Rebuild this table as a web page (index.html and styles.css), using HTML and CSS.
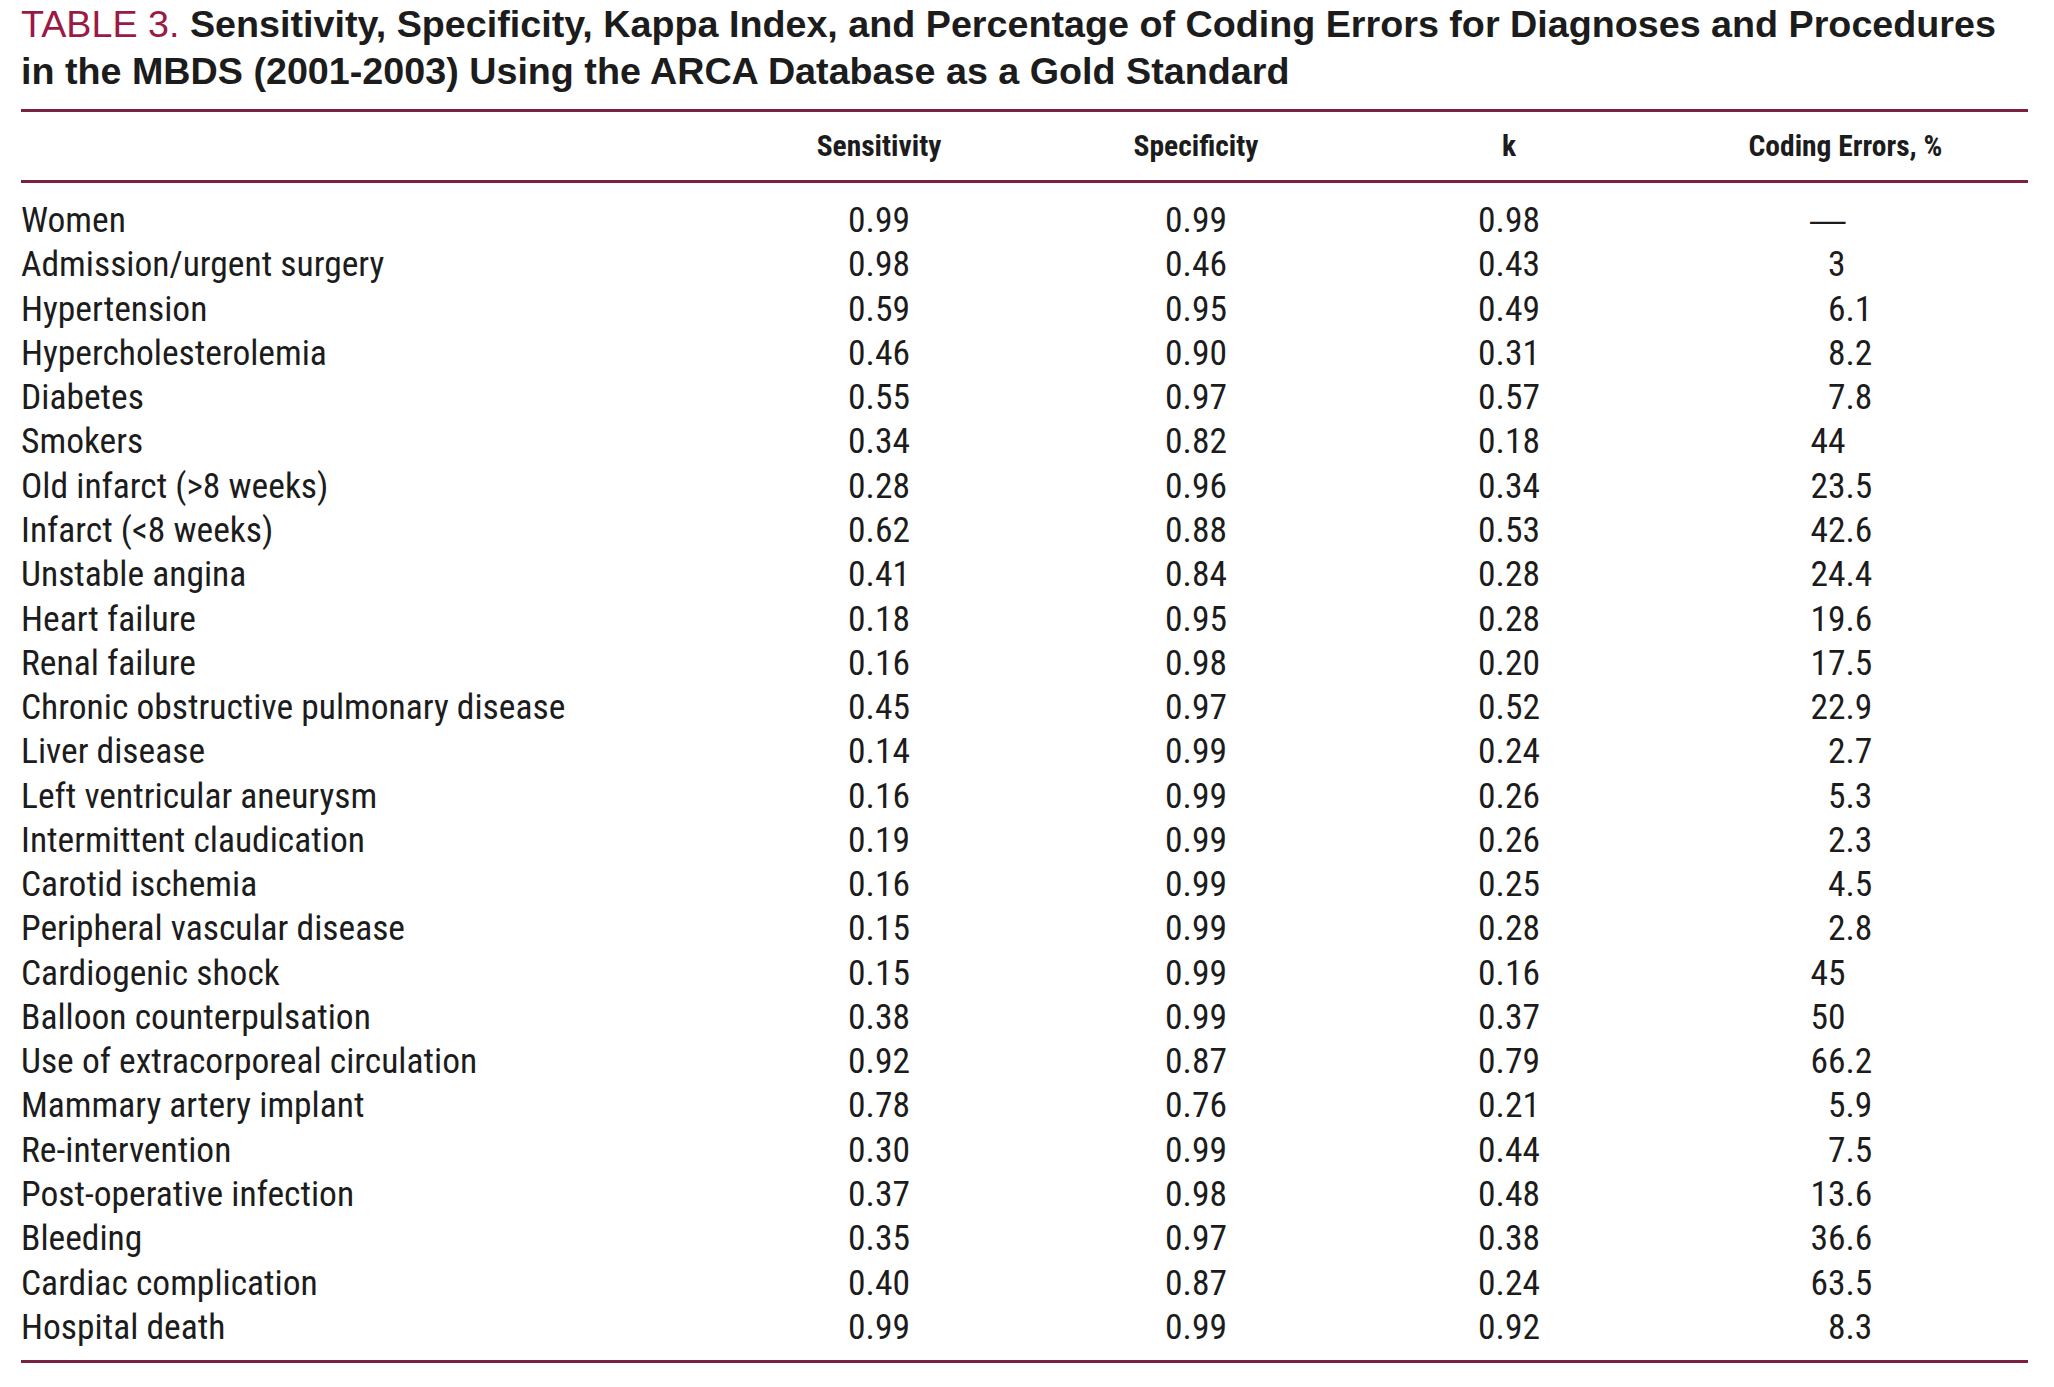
FILE: index.html
```html
<!DOCTYPE html>
<html lang="en">
<head>
<meta charset="utf-8">
<title>Table 3</title>
<link rel="stylesheet" href="styles.css">
</head>
<body>
<div class="page">
  <h1 class="caption"><span class="label">TABLE 3.</span> Sensitivity, Specificity, Kappa Index, and Percentage of Coding Errors for Diagnoses and Procedures<br>in the MBDS (2001-2003) Using the ARCA Database as a Gold Standard</h1>
  <div class="table">
    <div class="head">
      <div class="cell name"></div>
      <div class="cell">Sensitivity</div>
      <div class="cell">Specificity</div>
      <div class="cell">k</div>
      <div class="cell">Coding Errors, %</div>
    </div>
    <div class="body">
      <div class="row"><div class="name">Women</div><div class="num">0.99</div><div class="num">0.99</div><div class="num">0.98</div><div class="dec"><span class="i dash">—</span><span class="f"></span></div></div>
      <div class="row"><div class="name">Admission/urgent surgery</div><div class="num">0.98</div><div class="num">0.46</div><div class="num">0.43</div><div class="dec"><span class="i">3</span><span class="f"></span></div></div>
      <div class="row"><div class="name">Hypertension</div><div class="num">0.59</div><div class="num">0.95</div><div class="num">0.49</div><div class="dec"><span class="i">6</span><span class="f">.1</span></div></div>
      <div class="row"><div class="name">Hypercholesterolemia</div><div class="num">0.46</div><div class="num">0.90</div><div class="num">0.31</div><div class="dec"><span class="i">8</span><span class="f">.2</span></div></div>
      <div class="row"><div class="name">Diabetes</div><div class="num">0.55</div><div class="num">0.97</div><div class="num">0.57</div><div class="dec"><span class="i">7</span><span class="f">.8</span></div></div>
      <div class="row"><div class="name">Smokers</div><div class="num">0.34</div><div class="num">0.82</div><div class="num">0.18</div><div class="dec"><span class="i">44</span><span class="f"></span></div></div>
      <div class="row"><div class="name">Old infarct (&gt;8 weeks)</div><div class="num">0.28</div><div class="num">0.96</div><div class="num">0.34</div><div class="dec"><span class="i">23</span><span class="f">.5</span></div></div>
      <div class="row"><div class="name">Infarct (&lt;8 weeks)</div><div class="num">0.62</div><div class="num">0.88</div><div class="num">0.53</div><div class="dec"><span class="i">42</span><span class="f">.6</span></div></div>
      <div class="row"><div class="name">Unstable angina</div><div class="num">0.41</div><div class="num">0.84</div><div class="num">0.28</div><div class="dec"><span class="i">24</span><span class="f">.4</span></div></div>
      <div class="row"><div class="name">Heart failure</div><div class="num">0.18</div><div class="num">0.95</div><div class="num">0.28</div><div class="dec"><span class="i">19</span><span class="f">.6</span></div></div>
      <div class="row"><div class="name">Renal failure</div><div class="num">0.16</div><div class="num">0.98</div><div class="num">0.20</div><div class="dec"><span class="i">17</span><span class="f">.5</span></div></div>
      <div class="row"><div class="name">Chronic obstructive pulmonary disease</div><div class="num">0.45</div><div class="num">0.97</div><div class="num">0.52</div><div class="dec"><span class="i">22</span><span class="f">.9</span></div></div>
      <div class="row"><div class="name">Liver disease</div><div class="num">0.14</div><div class="num">0.99</div><div class="num">0.24</div><div class="dec"><span class="i">2</span><span class="f">.7</span></div></div>
      <div class="row"><div class="name">Left ventricular aneurysm</div><div class="num">0.16</div><div class="num">0.99</div><div class="num">0.26</div><div class="dec"><span class="i">5</span><span class="f">.3</span></div></div>
      <div class="row"><div class="name">Intermittent claudication</div><div class="num">0.19</div><div class="num">0.99</div><div class="num">0.26</div><div class="dec"><span class="i">2</span><span class="f">.3</span></div></div>
      <div class="row"><div class="name">Carotid ischemia</div><div class="num">0.16</div><div class="num">0.99</div><div class="num">0.25</div><div class="dec"><span class="i">4</span><span class="f">.5</span></div></div>
      <div class="row"><div class="name">Peripheral vascular disease</div><div class="num">0.15</div><div class="num">0.99</div><div class="num">0.28</div><div class="dec"><span class="i">2</span><span class="f">.8</span></div></div>
      <div class="row"><div class="name">Cardiogenic shock</div><div class="num">0.15</div><div class="num">0.99</div><div class="num">0.16</div><div class="dec"><span class="i">45</span><span class="f"></span></div></div>
      <div class="row"><div class="name">Balloon counterpulsation</div><div class="num">0.38</div><div class="num">0.99</div><div class="num">0.37</div><div class="dec"><span class="i">50</span><span class="f"></span></div></div>
      <div class="row"><div class="name">Use of extracorporeal circulation</div><div class="num">0.92</div><div class="num">0.87</div><div class="num">0.79</div><div class="dec"><span class="i">66</span><span class="f">.2</span></div></div>
      <div class="row"><div class="name">Mammary artery implant</div><div class="num">0.78</div><div class="num">0.76</div><div class="num">0.21</div><div class="dec"><span class="i">5</span><span class="f">.9</span></div></div>
      <div class="row"><div class="name">Re-intervention</div><div class="num">0.30</div><div class="num">0.99</div><div class="num">0.44</div><div class="dec"><span class="i">7</span><span class="f">.5</span></div></div>
      <div class="row"><div class="name">Post-operative infection</div><div class="num">0.37</div><div class="num">0.98</div><div class="num">0.48</div><div class="dec"><span class="i">13</span><span class="f">.6</span></div></div>
      <div class="row"><div class="name">Bleeding</div><div class="num">0.35</div><div class="num">0.97</div><div class="num">0.38</div><div class="dec"><span class="i">36</span><span class="f">.6</span></div></div>
      <div class="row"><div class="name">Cardiac complication</div><div class="num">0.40</div><div class="num">0.87</div><div class="num">0.24</div><div class="dec"><span class="i">63</span><span class="f">.5</span></div></div>
      <div class="row"><div class="name">Hospital death</div><div class="num">0.99</div><div class="num">0.99</div><div class="num">0.92</div><div class="dec"><span class="i">8</span><span class="f">.3</span></div></div>
    </div>
  </div>
</div>
</body>
</html>
```

FILE: styles.css
```css
html, body {
  margin: 0;
  padding: 0;
  background: #ffffff;
}

.page {
  width: 2007px;
  padding: 1px 0 0 21px;
  color: #1c1c1c;
}

.caption {
  margin: 0 0 14px 0;
  font-family: "Liberation Sans", Arial, sans-serif;
  font-weight: bold;
  font-size: 37.7px;
  line-height: 47px;
  color: #1c1c1c;
  white-space: nowrap;
}

.caption .label {
  font-weight: normal;
  color: #9b1a45;
}

.table {
  border-top: 3px solid #7a2144;
  border-bottom: 3px solid #7a2144;
  font-family: "Roboto Condensed", "Liberation Sans", Arial, sans-serif;
}

.head,
.row {
  display: grid;
  grid-template-columns: 700px 316px 318px 308px 1fr;
  align-items: center;
}

.head {
  height: 68px;
  border-bottom: 3px solid #7a2144;
  font-weight: bold;
  font-size: 29.5px;
}

.head .cell {
  text-align: center;
}

.body {
  padding: 15px 0 11px 0;
  font-size: 35.5px;
}

.row {
  height: 44.28px;
}

.num {
  text-align: center;
}

.dec {
  display: flex;
}

.dec .i {
  flex: 1;
  text-align: right;
}

.dec .dash {
  font-family: "Liberation Sans", Arial, sans-serif;
}

.dec .f {
  flex: 1;
  text-align: left;
}
```
